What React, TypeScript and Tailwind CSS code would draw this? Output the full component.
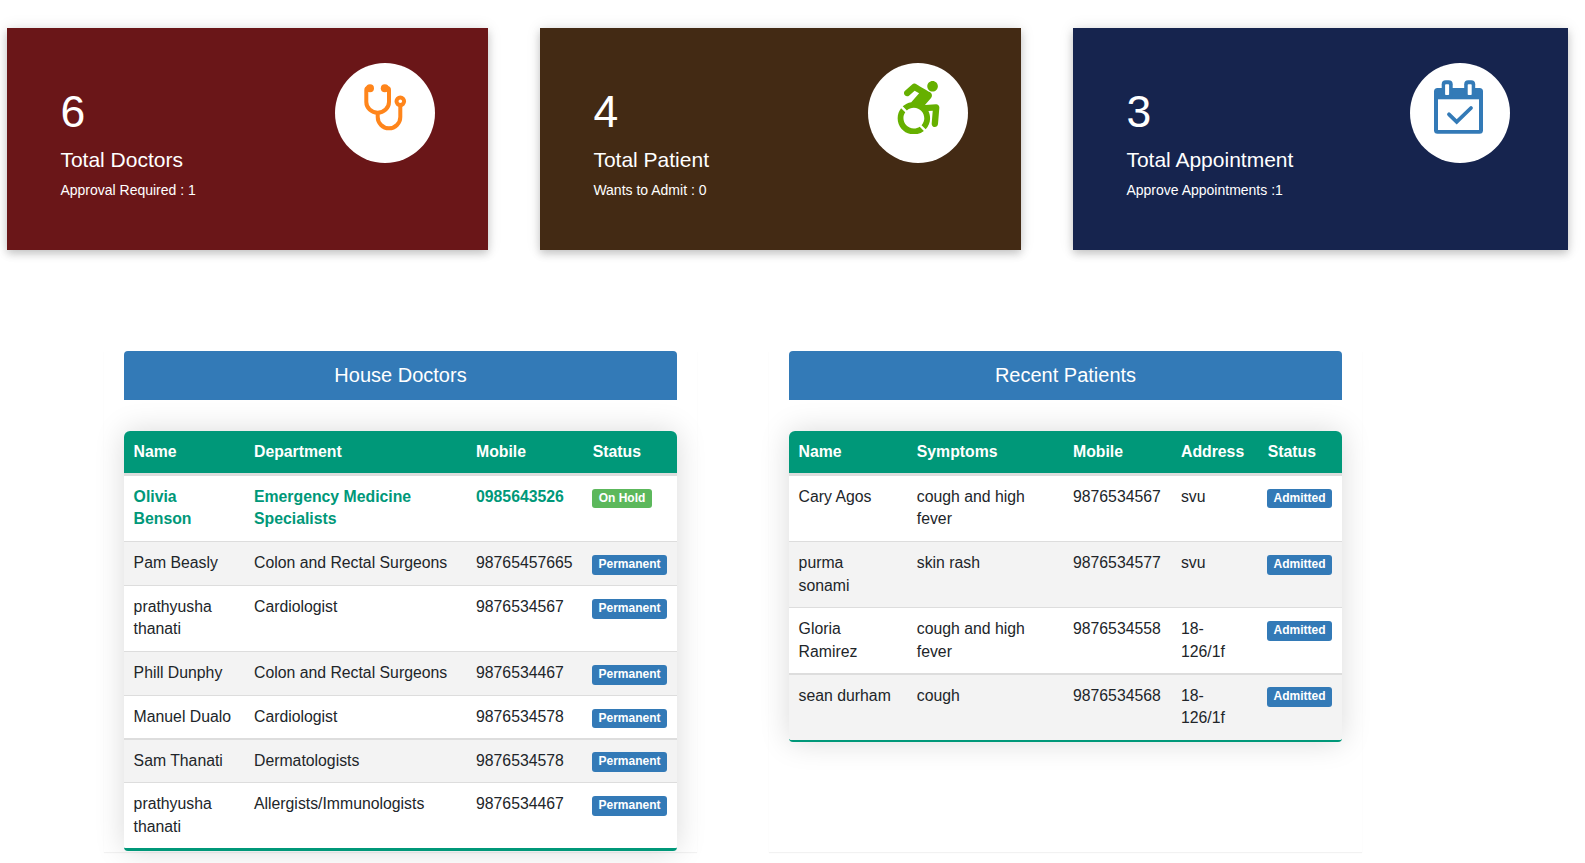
import type { ReactNode } from "react";
import { FaAccessibleIcon } from "react-icons/fa";

type StatProps = {
  className: string;
  count: number;
  title: string;
  note: string;
  icon: ReactNode;
};

function StatCard({ className, count, title, note, icon }: StatProps) {
  return (
    <section
      className={`flex h-[222px] justify-between pl-[53.4px] text-white shadow-[0_4px_8px_0_rgba(0,0,0,0.18),0_0px_14px_0_rgba(0,0,0,0.1)] ${className}`}
    >
      <div className="pt-[57px] whitespace-nowrap">
        <div className="h-[54px] text-[44.5px] leading-[54px]">{count}</div>
        <h2 className="mt-[8px] h-[26px] text-[21px] leading-[26px]">{title}</h2>
        <p className="mt-[7px] text-[14px] leading-[20px]">{note}</p>
      </div>
      <div className="mt-[35px] size-[100px] shrink-0 rounded-full bg-white">{icon}</div>
    </section>
  );
}

function Stethoscope() {
  return (
    <svg viewBox="0 0 100 100" className="size-[100px]" fill="none" stroke="#ff851b" strokeWidth="4">
      <path d="M35 25h-1.7q-2 0-2 2V39a11.35 10.7 0 0 0 22.7 0V27q0-2-2-2h-2.3" />
      <path d="M42.7 50V54a11.3 11.3 0 0 0 22.6 0V42" />
      <circle cx="65.3" cy="38.3" r="3.8" />
      <circle cx="35" cy="25.2" r="4" fill="#ff851b" stroke="none" />
      <circle cx="49.8" cy="25.2" r="4" fill="#ff851b" stroke="none" />
    </svg>
  );
}

function CalendarCheck() {
  return (
    <svg viewBox="0 0 100 100" className="size-[100px]">
      <rect x="24" y="25" width="49" height="45.7" rx="3.5" fill="#337ab7" />
      <rect x="31.7" y="17.3" width="11" height="18" rx="4" fill="#337ab7" />
      <rect x="54.2" y="17.3" width="11" height="18" rx="4" fill="#337ab7" />
      <rect x="35.1" y="21.3" width="4" height="10.7" rx="0.8" fill="#fff" />
      <rect x="57.7" y="21.3" width="4" height="10.7" rx="0.8" fill="#fff" />
      <rect x="28" y="36.3" width="41" height="30.7" fill="#fff" />
      <path d="M39 51.3l7.7 7.6L61 45" fill="none" stroke="#337ab7" strokeWidth="3.8" strokeLinecap="round" />
    </svg>
  );
}

function Badge({ label, className }: { label: string; className: string }) {
  return (
    <span
      className={`flex items-center justify-center rounded-[3px] text-[12px] leading-none font-bold text-white ${className}`}
    >
      {label}
    </span>
  );
}

type Row = { cells: string[]; badge: string; badgeClass: string; className: string };

type PanelProps = {
  title: string;
  headers: string[];
  columns: string;
  rows: Row[];
  foot: string;
};

function Panel({ title, headers, columns, rows, foot }: PanelProps) {
  return (
    <section className="h-[501px] w-[593px] bg-white px-5 shadow-[0_1px_1px_rgba(0,0,0,0.05)]">
      <h3 className="h-[49px] rounded-t-[4px] bg-[#337ab7] text-center text-[20px] leading-[48px] text-white">{title}</h3>
      <div
        className={`mt-[31px] w-[553px] overflow-hidden rounded-t-[6px] rounded-b-[4px] border-b-[#009879] bg-white text-[15.8px] leading-[22px] text-[#212529] shadow-[0_0_30px_rgba(0,0,0,0.15)] ${foot}`}
      >
        <div
          className={`grid h-[45px] border-b-[3px] border-[#ddd] bg-[#009879] pt-[10px] pl-[9.6px] font-bold text-white ${columns}`}
        >
          {headers.map((h) => (
            <span key={h} className="last:pl-[0.8px]">
              {h}
            </span>
          ))}
        </div>
        {rows.map((row, i) => (
          <div key={i} className={`grid items-start border-[#ddd] pl-[9.6px] ${columns} ${row.className}`}>
            {row.cells.map((cell, j) => (
              <span key={j} className="whitespace-pre-line">
                {cell}
              </span>
            ))}
            <Badge label={row.badge} className={row.badgeClass} />
          </div>
        ))}
      </div>
    </section>
  );
}

const permanent = "mt-[3px] h-[20px] w-[75px] bg-[#337ab7] pb-[3px]";
const permanentShort = "mt-[3px] h-[19px] w-[75px] bg-[#337ab7] pb-[2px]";
const permanentRaised = "mt-[2px] h-[20px] w-[75px] bg-[#337ab7] pb-[3px]";
const permanentLowered = "mt-[4px] h-[20px] w-[75px] bg-[#337ab7] pb-[3px]";
const onHold = "mt-[3px] h-[19px] w-[60px] bg-[#5cb85c] pb-[2px]";
const admittedShort = "mt-[3px] h-[19px] w-[65px] bg-[#337ab7] pb-[2px]";
const admittedRaised = "mt-[2px] h-[20px] w-[65px] bg-[#337ab7] pb-[3px]";
const admittedLowered = "mt-[4px] h-[20px] w-[65px] bg-[#337ab7] pb-[3px]";

const doctors: Row[] = [
  { cells: ["Olivia\nBenson", "Emergency Medicine\nSpecialists", "0985643526"], badge: "On Hold", badgeClass: onHold, className: "h-[65px] pt-[10px] bg-white font-bold text-[#009879]" },
  { cells: ["Pam Beasly", "Colon and Rectal Surgeons", "98765457665"], badge: "Permanent", badgeClass: permanent, className: "h-[44px] border-t pt-[10px] bg-[#f3f3f3]" },
  { cells: ["prathyusha\nthanati", "Cardiologist", "9876534567"], badge: "Permanent", badgeClass: permanent, className: "h-[66px] border-t pt-[10px] bg-white" },
  { cells: ["Phill Dunphy", "Colon and Rectal Surgeons", "9876534467"], badge: "Permanent", badgeClass: permanent, className: "h-[44px] border-t pt-[10px] bg-[#f3f3f3]" },
  { cells: ["Manuel Dualo", "Cardiologist", "9876534578"], badge: "Permanent", badgeClass: permanentShort, className: "h-[43px] border-t pt-[10px] bg-white" },
  { cells: ["Sam Thanati", "Dermatologists", "9876534578"], badge: "Permanent", badgeClass: permanentRaised, className: "h-[44px] border-t-2 pt-[10px] bg-[#f3f3f3]" },
  { cells: ["prathyusha\nthanati", "Allergists/Immunologists", "9876534467"], badge: "Permanent", badgeClass: permanentLowered, className: "h-[66px] border-t pt-[9px] bg-white leading-[23px]" },
];

const patients: Row[] = [
  { cells: ["Cary Agos", "cough and high\nfever", "9876534567", "svu"], badge: "Admitted", badgeClass: admittedShort, className: "h-[65px] pt-[10px] bg-white" },
  { cells: ["purma\nsonami", "skin rash", "9876534577", "svu"], badge: "Admitted", badgeClass: admittedLowered, className: "h-[66px] border-t pt-[9px] bg-[#f3f3f3] leading-[23px]" },
  { cells: ["Gloria\nRamirez", "cough and high\nfever", "9876534558", "18-\n126/1f"], badge: "Admitted", badgeClass: admittedLowered, className: "h-[66px] border-t pt-[9px] bg-white leading-[23px]" },
  { cells: ["sean durham", "cough", "9876534568", "18-\n126/1f"], badge: "Admitted", badgeClass: admittedRaised, className: "h-[67px] border-t-2 pt-[10px] bg-[#f3f3f3]" },
];

export default function App() {
  return (
    <main className="h-[863px] w-[1585px] overflow-hidden bg-white pt-[28px] font-['Liberation_Sans',Arial,sans-serif]">
      <div className="flex gap-[52px] pl-[7px]">
        <StatCard className="w-[481px] bg-[#6a1618] pr-[53px]" count={6} title="Total Doctors" note="Approval Required : 1" icon={<Stethoscope />} />
        <StatCard
          className="w-[481px] bg-[#432a14] pr-[53px]"
          count={4}
          title="Total Patient"
          note="Wants to Admit : 0"
          icon={<FaAccessibleIcon className="mt-[17.5px] ml-[27px] h-[53.4px] w-[47px] text-[#66b000]" />}
        />
        <StatCard className="w-[495px] bg-[#16244e] pr-[58px]" count={3} title="Total Appointment" note="Approve Appointments :1" icon={<CalendarCheck />} />
      </div>
      <div className="mt-[101px] flex gap-[72px] pl-[104px]">
        <Panel
          title="House Doctors"
          headers={["Name", "Department", "Mobile", "Status"]}
          columns="grid-cols-[120.4px_222px_116px_85px]"
          rows={doctors}
          foot="border-b-[3px]"
        />
        <Panel
          title="Recent Patients"
          headers={["Name", "Symptoms", "Mobile", "Address", "Status"]}
          columns="grid-cols-[118.2px_156.2px_108px_86px_75px]"
          rows={patients}
          foot="border-b-2"
        />
      </div>
    </main>
  );
}
